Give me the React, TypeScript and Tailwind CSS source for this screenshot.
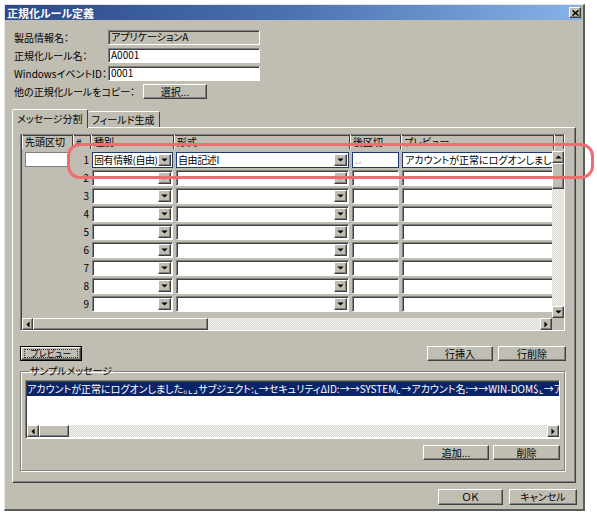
import React from 'react';

// classic win32 dialog bits
const raised =
  'bg-[#c0bdb2] border-t border-l border-white border-r border-b border-r-[#404040] border-b-[#404040] shadow-[inset_-1px_-1px_#808080]';
const sunken =
  'border-t border-l border-[#808080] border-r border-b border-r-white border-b-white shadow-[inset_1px_1px_#404040]';
const track =
  'bg-[image:repeating-conic-gradient(#d6d4ce_0%_25%,#f6f5f2_0%_50%)] bg-[length:2px_2px]';

function Tri({ dir }: { dir: 'up' | 'down' | 'left' | 'right' }) {
  const pts = {
    up: '0,4 3.5,0.5 7,4',
    down: '0,0.5 7,0.5 3.5,4',
    left: '4,0 4,7 0.5,3.5',
    right: '0.5,0 0.5,7 4,3.5',
  }[dir];
  const vertical = dir === 'up' || dir === 'down';
  return (
    <svg width={vertical ? 7 : 4} height={vertical ? 4 : 7} viewBox={vertical ? '0 0 7 4.5' : '0 0 4.5 7'}>
      <polygon points={pts} fill="#000" />
    </svg>
  );
}

function ArrowBox({ dir, className }: { dir: 'up' | 'down' | 'left' | 'right'; className: string }) {
  return <div className={`${raised} flex items-center justify-center shrink-0 ${className}`}><Tri dir={dir} /></div>;
}

function Button({ children, className, focus }: { children: React.ReactNode; className: string; focus?: boolean }) {
  if (focus) {
    return (
      <div className={`border border-black ${className}`}>
        <div className={`${raised} h-full flex items-center justify-center px-[2px] py-[1px]`}>
          <div className="h-full w-full border border-dotted border-[#333] flex items-center justify-center whitespace-nowrap text-[9px] leading-[10px]">
            {children}
          </div>
        </div>
      </div>
    );
  }
  return <div className={`${raised} flex items-center justify-center whitespace-nowrap ${className}`}>{children}</div>;
}

function FormRow({ label, labelW, children }: { label: string; labelW: string; children: React.ReactNode }) {
  return (
    <div className="flex items-center h-[15px]">
      <div className={`${labelW} shrink-0 whitespace-nowrap`}>{label}</div>
      {children}
    </div>
  );
}

function Combo({ w, text, active }: { w: string; text?: string; active?: boolean }) {
  return (
    <div
      className={`${w} h-[16px] bg-white flex items-center justify-between shrink-0 ${
        active ? 'border border-[#1f3a6e]' : sunken
      }`}
    >
      <span className="pl-[1px] whitespace-nowrap tracking-[-0.4px]">{text}</span>
      <ArrowBox dir="down" className="w-[13px] h-[12px] mr-[1px]" />
    </div>
  );
}

function Cell({ w, children, active }: { w: string; children?: React.ReactNode; active?: boolean }) {
  return (
    <div
      className={`${w} h-[16px] bg-white flex items-center shrink-0 overflow-hidden whitespace-nowrap pl-[2px] ${
        active ? 'border border-[#1f3a6e]' : sunken
      }`}
    >
      {children}
    </div>
  );
}

const headers = [
  { label: '先頭区切', w: 'w-[51px]' },
  { label: '#', w: 'w-[18px]' },
  { label: '種別', w: 'w-[83px]' },
  { label: '形式', w: 'w-[176px]' },
  { label: '後区切', w: 'w-[51px]' },
  { label: 'プレビュー', w: 'w-[153px]' },
];

const rows = [1, 2, 3, 4, 5, 6, 7, 8, 9];

function Grid() {
  return (
    <div className={`w-[545px] h-[197px] flex flex-col ${sunken} bg-[#c0bdb2]`}>
      <div className="flex h-[14px] ml-[1px]">
        {headers.map((h) => (
          <div
            key={h.label}
            className={`${h.w} shrink-0 h-full border-l border-white border-r border-r-[#404040] pl-[2px] leading-[13px] whitespace-nowrap overflow-hidden`}
          >
            {h.label}
          </div>
        ))}
        <div className="flex-1 border-l border-white border-r border-r-[#404040]" />
      </div>
      <div className="flex h-[169px] ml-[1px]">
        <div className="w-[531px] overflow-hidden flex flex-col">
          {rows.map((n) => {
            const a = n === 1;
            return (
              <div key={n} className="flex h-[18px] pt-[3px] shrink-0">
                <div className="w-[51px] shrink-0">
                  {a && <div className="ml-[3px] w-[45px] h-[15px] bg-white border border-[#808080]" />}
                </div>
                <div className="w-[18px] shrink-0 text-right pr-[2px] leading-[16px]">{n}</div>
                <div className="w-[83px] shrink-0 pl-[1px]">
                  <Combo w="w-[81px]" active={a} text={a ? '固有情報(自由)' : ''} />
                </div>
                <div className="w-[176px] shrink-0 pl-[2px]">
                  <Combo w="w-[173px]" active={a} text={a ? '自由記述I' : ''} />
                </div>
                <div className="w-[51px] shrink-0 pl-[2px]">
                  <Cell w="w-[47px]" active={a}>
                    {a && <span className="text-[#a0a0a0] text-[7px]">⌞⌟</span>}
                  </Cell>
                </div>
                <div className="w-[153px] shrink-0 pl-[1px]">
                  <Cell w="w-[170px]" active={a}>
                    {a ? 'アカウントが正常にログオンしました' : ''}
                  </Cell>
                </div>
              </div>
            );
          })}
        </div>
        <div className="w-[12px] flex flex-col">
          <ArrowBox dir="up" className="w-[12px] h-[12px] mt-[2px]" />
          <div className={`${raised} h-[26px]`} />
          <div className={`flex-1 ${track}`} />
          <ArrowBox dir="down" className="w-[12px] h-[12px]" />
        </div>
      </div>
      <div className="flex h-[12px] ml-[1px]">
        <ArrowBox dir="left" className="w-[11px] h-[12px]" />
        <div className={`${raised} w-[175px] h-[12px]`} />
        <div className={`flex-1 ${track}`} />
        <ArrowBox dir="right" className="w-[12px] h-[12px]" />
        <div className="w-[12px]" />
      </div>
    </div>
  );
}

const sample =
  'アカウントが正常にログオンしました。⌞⌟サブジェクト:⌞→セキュリティΔID:→→SYSTEM⌞→アカウント名:→→WIN-DOM$⌞→アカウント';

export default function App() {
  return (
    <div className="relative w-[597px] h-[514px] bg-white pt-[4px] pl-[4px] font-['Noto_Sans_CJK_JP','Noto_Sans',sans-serif] [font-feature-settings:'palt'] text-[10px] leading-[12px] text-black">
      <div className="w-[581px] h-[507px] bg-[#c0bdb2] border-t border-l border-[#e6e4de] border-r-2 border-b-2 border-r-[#5c5c5c] border-b-[#5c5c5c] flex flex-col">
        {/* title bar */}
        <div className="h-[15px] mr-[1px] flex items-center justify-between bg-gradient-to-r from-[#29498b] via-[#4d72b0] to-[#86b3e9] pl-[2px]">
          <span className="text-white font-bold text-[11px]">正規化ルール定義</span>
          <div className={`${raised} w-[12px] h-[11px] mr-[1px] flex items-center justify-center`}>
            <svg width="7" height="6" viewBox="0 0 7 6">
              <path d="M0.5 0.5 L6.5 5.5 M6.5 0.5 L0.5 5.5" stroke="#000" strokeWidth="1.6" />
            </svg>
          </div>
        </div>

        {/* header form */}
        <div className="flex flex-col gap-[3px] mt-[10px] pl-[9px]">
          <FormRow label="製品情報名：" labelW="w-[94px]">
            <div className={`w-[152px] h-[15px] ${sunken} pl-[2px] leading-[12px]`}>アプリケーションA</div>
          </FormRow>
          <FormRow label="正規化ルール名：" labelW="w-[94px]">
            <div className={`w-[152px] h-[15px] ${sunken} bg-white pl-[2px] leading-[12px]`}>A0001</div>
          </FormRow>
          <FormRow label="WindowsイベントID：" labelW="w-[94px]">
            <div className={`w-[152px] h-[15px] ${sunken} bg-white pl-[2px] leading-[12px]`}>0001</div>
          </FormRow>
          <FormRow label="他の正規化ルールをコピー：" labelW="w-[129px]">
            <Button className="w-[64px] h-[15px]">選択...</Button>
          </FormRow>
        </div>

        {/* tabs */}
        <div className="flex items-end h-[18px] mt-[10px] ml-[7px]">
          <div className="relative z-10 h-[19px] -mb-[1px] px-[4px] bg-[#c0bdb2] border-t border-l border-white border-r border-r-[#404040] rounded-t-[2px] flex items-center">
            メッセージ分割
          </div>
          <div className="h-[16px] px-[4px] border-t border-white border-r border-r-[#404040] rounded-t-[2px] flex items-center">
            フィールド生成
          </div>
        </div>
        <div className="ml-[7px] w-[564px] h-[356px] border-t border-l border-white border-r border-b border-r-[#404040] border-b-[#404040] shadow-[inset_-1px_-1px_#808080] pt-[6px] pl-[7px] flex flex-col">
          <Grid />

          <div className="flex items-center justify-between w-[546px] mt-[15px]">
            <Button focus className="w-[62px] h-[15px]">プレビュー</Button>
            <div className="flex gap-[5px]">
              <Button className="w-[66px] h-[15px]">行挿入</Button>
              <Button className="w-[68px] h-[15px]">行削除</Button>
            </div>
          </div>

          <fieldset className="mt-[4px] w-[545px] h-[106px] border border-[#808080] shadow-[1px_1px_0_white,inset_1px_1px_0_white] px-[4px] flex flex-col">
            <legend className="ml-[4px] px-[1px]">サンプルメッセージ</legend>
            <div className={`mt-[3px] w-[535px] h-[59px] ${sunken} bg-white flex flex-col justify-between`}>
              <div className="mt-[1px] ml-[1px] h-[14px] bg-[#0a246a] text-white whitespace-nowrap overflow-hidden leading-[14px]">
                {sample}
              </div>
              <div className="flex h-[12px] ml-[1px] mb-[1px]">
                <ArrowBox dir="left" className="w-[12px] h-[12px]" />
                <div className={`${raised} w-[30px] h-[12px]`} />
                <div className={`flex-1 ${track}`} />
                <ArrowBox dir="right" className="w-[12px] h-[12px]" />
              </div>
            </div>
            <div className="flex justify-end gap-[4px] w-[535px] mt-[6px]">
              <Button className="w-[66px] h-[15px]">追加...</Button>
              <Button className="w-[67px] h-[15px]">削除</Button>
            </div>
          </fieldset>
        </div>

        {/* dialog buttons */}
        <div className="flex justify-end gap-[6px] mt-[6px] pr-[6px]">
          <Button className="w-[65px] h-[16px]">ＯＫ</Button>
          <Button className="w-[68px] h-[16px]">キャンセル</Button>
        </div>
      </div>

      {/* callout ring over row 1 */}
      <div className="absolute left-[67px] top-[143px] w-[527px] h-[36px] border-[3px] border-[#ef6d70] rounded-[13px] pointer-events-none" />
    </div>
  );
}
